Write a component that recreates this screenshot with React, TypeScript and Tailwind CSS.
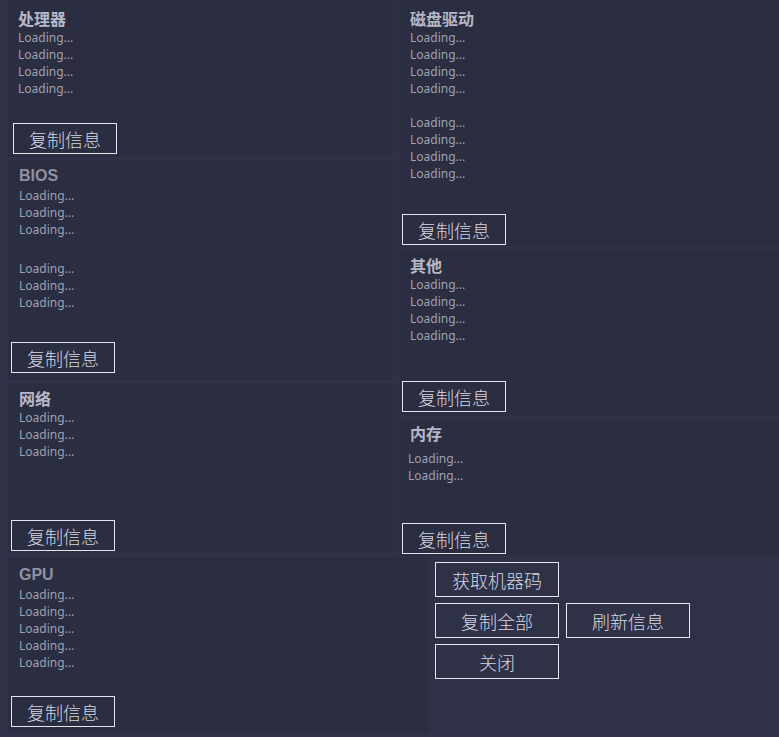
import React from "react";

const cjk = { fontFamily: '"Noto Sans CJK SC", "Noto Sans", sans-serif' };
const latin = { fontFamily: '"Liberation Sans", Arial, sans-serif' };
const ui = { fontFamily: '"Noto Sans", "Open Sans", sans-serif' };

function Lines({ n }: { n: number }) {
  return (
    <>
      {Array.from({ length: n }).map((_, i) => (
        <div key={i} className="h-[17px] text-[12px] leading-[17px] text-[#9fa1b2]" style={ui}>
          Loading...
        </div>
      ))}
    </>
  );
}

function CopyButton({ className = "" }: { className?: string }) {
  return (
    <button
      type="button"
      className={`mt-auto flex h-[31px] w-[104px] shrink-0 items-center justify-center border border-[#e6e7ee] text-[18px] font-light leading-none text-[#d6d7e0] ${className}`}
      style={cjk}
    >
      复制信息
    </button>
  );
}

function Title({ text, latinFont = false, className = "" }: { text: string; latinFont?: boolean; className?: string }) {
  return (
    <div
      className={`flex h-[22px] items-center text-[16px] font-bold leading-[22px] ${latinFont ? "text-[#8f91a3]" : "text-[#b6b8c6]"} ${className}`}
      style={latinFont ? latin : cjk}
    >
      {text}
    </div>
  );
}

function ActionButton({ label }: { label: string }) {
  return (
    <button
      type="button"
      className="flex h-[35px] w-[124px] items-center justify-center border border-[#e6e7ee] text-[18px] font-light leading-none text-[#d6d7e0]"
      style={cjk}
    >
      {label}
    </button>
  );
}

export default function App() {
  return (
    <div className="flex h-[737px] w-[779px] flex-col overflow-hidden bg-[#2f3147]">
      <div className="flex">
        {/* left column */}
        <div className="ml-2 flex w-[385px] flex-col gap-[3px]">
          <section className="flex h-[157px] flex-col bg-[#2b2d40] pl-[10px] pt-[7px] pb-[3px]">
            <Title text="处理器" />
            <Lines n={4} />
            <CopyButton className="-ml-[5px]" />
          </section>
          <section className="flex h-[220px] flex-col bg-[#2b2d40] pl-[11px] pt-[5px] pb-[7px]">
            <Title text="BIOS" latinFont />
            <Lines n={3} />
            <div className="h-[22px]" />
            <Lines n={3} />
            <CopyButton className="-ml-[8px]" />
          </section>
          <section className="flex h-[170px] flex-col bg-[#2b2d40] pl-[11px] pt-[4px] pb-[2px]">
            <Title text="网络" />
            <Lines n={3} />
            <CopyButton className="-ml-[8px]" />
          </section>
        </div>

        {/* right column */}
        <div className="ml-[7px] flex flex-1 flex-col gap-[4px]">
          <section className="flex h-[246px] flex-col bg-[#2b2d40] pl-[10px] pt-[7px] pb-[1px]">
            <Title text="磁盘驱动" />
            <Lines n={4} />
            <div className="h-[17px]" />
            <Lines n={4} />
            <CopyButton className="-ml-[8px]" />
          </section>
          <section className="flex h-[165px] flex-col bg-[#2b2d40] pl-[10px] pt-[4px] pb-[3px]">
            <Title text="其他" />
            <Lines n={4} />
            <CopyButton className="-ml-[8px]" />
          </section>
          <section className="flex h-[137px] flex-col bg-[#2b2d40] pl-[8px] pt-[3px] pb-[2px]">
            <Title text="内存" className="ml-[2px]" />
            <div className="h-[6px]" />
            <Lines n={2} />
            <CopyButton className="-ml-[6px]" />
          </section>
        </div>
      </div>

      <div className="mt-[1px] flex">
        <section className="ml-2 flex h-[175px] w-[420px] flex-col bg-[#2b2d40] pl-[11px] pt-[7px] pb-[5px]">
          <Title text="GPU" latinFont />
          <Lines n={5} />
          <CopyButton className="-ml-[8px]" />
        </section>
        <div className="ml-[7px] mt-[5px] flex flex-col gap-[6px]">
          <ActionButton label="获取机器码" />
          <div className="flex gap-[7px]">
            <ActionButton label="复制全部" />
            <ActionButton label="刷新信息" />
          </div>
          <ActionButton label="关闭" />
        </div>
      </div>
    </div>
  );
}
